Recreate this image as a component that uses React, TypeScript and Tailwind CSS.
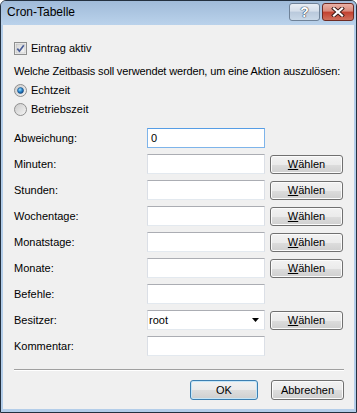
import React from 'react';

const font = "font-['Liberation_Sans',Arial,sans-serif]";

const btnBg =
    'bg-[linear-gradient(to_bottom,#f2f2f2_0%,#ebebeb_50%,#dddddd_51%,#cfcfcf_100%)]';

const Waehlen = () => (
    <button className={`ml-[5px] w-[73px] h-[19px] rounded-[3px] border border-[#707070] ${btnBg} text-[11px] text-black flex items-center justify-center shadow-[inset_0_0_0_1px_#fbfbfb]`}>
        <span className="underline underline-offset-[1px]">W</span>ählen
    </button>
);

const TextBox = ({ value, focused }: { value?: string; focused?: boolean }) => (
    <div
        className={`w-[118px] h-[20px] bg-white border flex items-center pl-[3px] text-[11px] ${
            focused
                ? 'border-[#7eb4ea] border-t-[#569de5]'
                : 'border-[#e3e9ef] border-t-[#abadb3] border-l-[#dbdfe6] border-r-[#dbdfe6]'
        }`}
    >
        {value}
    </div>
);

const Row = ({ label, children }: { label: string; children: React.ReactNode }) => (
    <div className="flex items-center h-[20px]">
        <div className="w-[133px] text-[11px]">{label}</div>
        {children}
    </div>
);

const Radio = ({ checked }: { checked?: boolean }) => (
    <svg width="13" height="13" viewBox="0 0 13 13">
        <defs>
            <linearGradient id={checked ? 'rg1' : 'rg0'} x1="0" y1="0" x2="1" y2="1">
                <stop offset="0" stopColor="#c9c9c9" />
                <stop offset="1" stopColor="#f6f6f6" />
            </linearGradient>
            <radialGradient id="dot" cx="0.4" cy="0.35" r="0.7">
                <stop offset="0" stopColor="#9fe0fb" />
                <stop offset="0.5" stopColor="#2b8ad1" />
                <stop offset="1" stopColor="#0f3f78" />
            </radialGradient>
        </defs>
        <circle cx="6.5" cy="6.5" r="6" fill={`url(#${checked ? 'rg1' : 'rg0'})`} stroke="#8f8f8f" />
        {checked && <circle cx="6.5" cy="6.5" r="3" fill="url(#dot)" stroke="#1c4c80" strokeWidth="0.6" />}
    </svg>
);

export default function App() {
    return (
        <div className={`w-[357px] h-[413px] ${font} text-black`}>
            <div className="w-full h-full border border-[#23303f] rounded-t-[6px] bg-[#b3cde9] flex flex-col overflow-hidden">
                {/* title bar */}
                <div className="h-[24px] bg-gradient-to-b from-[#a0bbd9] to-[#bad2eb] flex items-start">
                    <div className="pl-[6px] pt-[4px] text-[12px] leading-[15px] text-black">Cron-Tabelle</div>
                    <div className="ml-auto flex pt-[2px] pr-[2px] gap-[2px]">
                        <div className="w-[31px] h-[18px] rounded-[3px] border border-[#6f8298] bg-[linear-gradient(to_bottom,#e8eef5_0%,#d4deea_45%,#b9c9dc_50%,#c9d8e8_100%)] flex items-center justify-center">
                            <span className="text-[14px] font-bold text-white leading-none [text-shadow:0_0_1px_#2d3e52,0_0_1px_#2d3e52,0_0_1px_#2d3e52]">?</span>
                        </div>
                        <div className="w-[32px] h-[18px] rounded-[3px] border border-[#6e2a22] bg-[linear-gradient(to_bottom,#eab1a6_0%,#d98a7b_45%,#c2402f_50%,#d0705c_100%)] flex items-center justify-center">
                            <svg width="14" height="10" viewBox="0 0 14 10">
                                <path d="M3 1.5 L11 8.5 M11 1.5 L3 8.5" stroke="#3a1a16" strokeWidth="4" strokeLinecap="square" />
                                <path d="M3 1.5 L11 8.5 M11 1.5 L3 8.5" stroke="#ffffff" strokeWidth="2.2" strokeLinecap="square" />
                            </svg>
                        </div>
                    </div>
                </div>

                {/* client */}
                <div className="flex-1 mx-[2px] mb-[3px] bg-[#f0f0f0] pl-[11px] pr-[10px] text-[11px]">
                    <div className="mt-[17px] h-[13px] flex items-center gap-[4px]">
                        <svg width="13" height="13" viewBox="0 0 13 13">
                            <defs>
                                <linearGradient id="cb" x1="0" y1="0" x2="1" y2="1">
                                    <stop offset="0" stopColor="#d4d4d4" />
                                    <stop offset="1" stopColor="#f7f7f7" />
                                </linearGradient>
                            </defs>
                            <rect x="0.5" y="0.5" width="12" height="12" fill="#f4f4f4" stroke="#8e8f8f" />
                            <rect x="2" y="2" width="9" height="9" fill="url(#cb)" stroke="#b0b0b0" strokeWidth="0.5" />
                            <path d="M3.3 6.6 L5.4 9.2 L9.8 3.2" stroke="#4b5f98" strokeWidth="1.7" fill="none" />
                        </svg>
                        <span>Eintrag aktiv</span>
                    </div>

                    <div className="mt-[9px] h-[14px] flex items-center whitespace-nowrap tracking-[-0.15px]">
                        Welche Zeitbasis soll verwendet werden, um eine Aktion auszulösen:
                    </div>

                    <div className="mt-[6px] h-[13px] flex items-center gap-[4px]">
                        <Radio checked />
                        <span>Echtzeit</span>
                    </div>
                    <div className="mt-[6px] h-[13px] flex items-center gap-[4px]">
                        <Radio />
                        <span>Betriebszeit</span>
                    </div>

                    <div className="mt-[12px] flex flex-col gap-[6px]">
                        <Row label="Abweichung:">
                            <TextBox value="0" focused />
                        </Row>
                        <Row label="Minuten:">
                            <TextBox />
                            <Waehlen />
                        </Row>
                        <Row label="Stunden:">
                            <TextBox />
                            <Waehlen />
                        </Row>
                        <Row label="Wochentage:">
                            <TextBox />
                            <Waehlen />
                        </Row>
                        <Row label="Monatstage:">
                            <TextBox />
                            <Waehlen />
                        </Row>
                        <Row label="Monate:">
                            <TextBox />
                            <Waehlen />
                        </Row>
                        <Row label="Befehle:">
                            <TextBox />
                        </Row>
                        <Row label="Besitzer:">
                            <div className="w-[118px] h-[20px] bg-white border border-[#e3e9ef] border-t-[#abadb3] border-l-[#dbdfe6] border-r-[#dbdfe6] flex items-center pl-[1px] pr-[5px]">
                                <span>root</span>
                                <svg className="ml-auto" width="7" height="4" viewBox="0 0 7 4">
                                    <path d="M0 0 H7 L3.5 4 Z" fill="#000" />
                                </svg>
                            </div>
                            <Waehlen />
                        </Row>
                        <Row label="Kommentar:">
                            <TextBox />
                        </Row>
                    </div>

                    <div className="mt-[13px] h-[2px] border-t border-[#a0a0a0] border-b border-b-white" />

                    <div className="mt-[9px] flex justify-end">
                        <button className={`w-[68px] h-[20px] rounded-[3px] border border-[#3c7fb1] ${btnBg} shadow-[inset_0_0_0_1px_#c5e6f8] text-[11px] flex items-center justify-center`}>
                            OK
                        </button>
                        <button className={`ml-[13px] w-[73px] h-[20px] rounded-[3px] border border-[#707070] ${btnBg} shadow-[inset_0_0_0_1px_#fbfbfb] text-[11px] flex items-center justify-center`}>
                            Abbrechen
                        </button>
                    </div>
                </div>
            </div>
        </div>
    );
}
